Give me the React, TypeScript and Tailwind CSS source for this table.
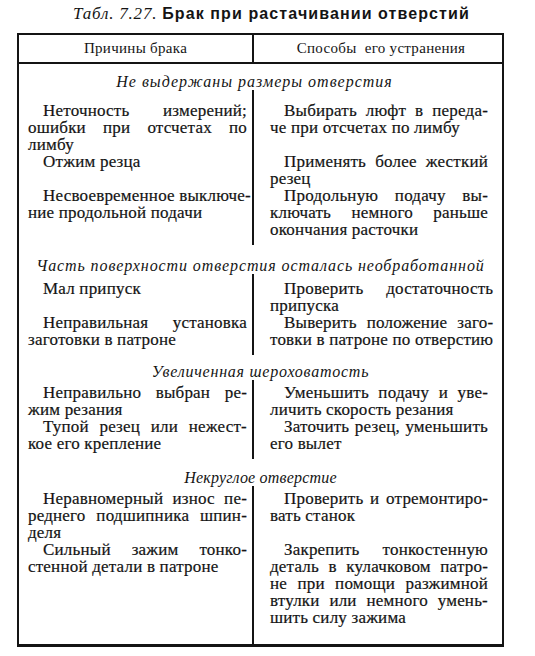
import React from "react";

type Row = [string[], string[]];
type Section = {
  title: string;
  headCls: string;
  firstCls: string;
  lastCls: string;
  rows: Row[];
};

const sections: Section[] = [
  {
    title: "Не выдержаны размеры отверстия",
    headCls: "pt-[9px] tracking-[1px] pr-[12px]",
    firstCls: "pt-[12px]",
    lastCls: "pb-[7px]",
    rows: [
      [
        ["Неточность измерений;", "ошибки при отсчетах по", "лимбу"],
        ["Выбирать люфт в переда-", "че при отсчетах по лимбу"],
      ],
      [["Отжим резца"], ["Применять более жесткий", "резец"]],
      [
        ["Несвоевременное выключе-", "ние продольной подачи"],
        ["Продольную подачу вы-", "ключать немного раньше", "окончания расточки"],
      ],
    ],
  },
  {
    title: "Часть поверхности отверстия осталась необработанной",
    headCls: "pt-[12px] tracking-[0.9px]",
    firstCls: "pt-[6px]",
    lastCls: "pb-[7px]",
    rows: [
      [["Мал припуск"], ["Проверить достаточность", "припуска"]],
      [
        ["Неправильная установка", "заготовки в патроне"],
        ["Выверить положение заго-", "товки в патроне по отверстию"],
      ],
    ],
  },
  {
    title: "Увеличенная шероховатость",
    headCls: "pt-[8px] tracking-[0.75px]",
    firstCls: "pt-[4px]",
    lastCls: "pb-[7px]",
    rows: [
      [
        ["Неправильно выбран ре-", "жим резания"],
        ["Уменьшить подачу и уве-", "личить скорость резания"],
      ],
      [
        ["Тупой резец или нежест-", "кое его крепление"],
        ["Заточить резец, уменьшить", "его вылет"],
      ],
    ],
  },
  {
    title: "Некруглое отверстие",
    headCls: "pt-[10px] tracking-[0.2px]",
    firstCls: "pt-[4px]",
    lastCls: "pb-[18px]",
    rows: [
      [
        ["Неравномерный износ пе-", "реднего подшипника шпин-", "деля"],
        ["Проверить и отремонтиро-", "вать станок"],
      ],
      [
        ["Сильный зажим тонко-", "стенной детали в патроне"],
        [
          "Закрепить тонкостенную",
          "деталь в кулачковом патро-",
          "не при помощи разжимной",
          "втулки или немного умень-",
          "шить силу зажима",
        ],
      ],
    ],
  },
];

function Lines({ lines, left }: { lines: string[]; left: boolean }) {
  return (
    <>
      {lines.map((l, i) => {
        const last = i === lines.length - 1;
        const indent = i === 0 ? (left ? "pl-[15px]" : "pl-[14px]") : "";
        return (
          <div
            key={i}
            className={
              "whitespace-nowrap h-[17px] " +
              indent +
              (last ? " text-left" : " text-justify [text-align-last:justify]")
            }
          >
            {l}
          </div>
        );
      })}
    </>
  );
}

export default function App() {
  return (
    <div className="w-[535px] h-[656px] bg-white text-[#141414] overflow-hidden font-['Liberation_Serif',serif]">
      <div className="pt-[4px] h-[33px] leading-[20px] text-center pl-[8px] whitespace-nowrap">
        <span className="italic text-[17px] tracking-[0.8px]">Табл. 7.27.</span>
        <span className="text-[16px] font-bold tracking-[1.1px] ml-[5px] font-['Liberation_Sans',sans-serif]">
          Брак при растачивании отверстий
        </span>
      </div>
      <div className="ml-[17px] w-[487px] border-x-2 border-t-2 border-b-[3px] border-[#141414]">
        <div className="grid grid-cols-[235px_1fr] border-b-2 border-[#141414] h-[29px] text-[15px] leading-[27px] tracking-[0.3px]">
          <div className="border-r-2 border-[#141414] text-center">Причины брака</div>
          <div className="text-center pl-[6px]">Способы&nbsp; его устранения</div>
        </div>
        {sections.map((s, si) => (
          <div key={si}>
            <div
              className={
                "text-center italic text-[16px] leading-[17px] whitespace-nowrap " +
                s.headCls
              }
            >
              {s.title}
            </div>
            <div className="grid grid-cols-[235px_1fr] text-[17px] leading-[17px] tracking-[0.2px] [-webkit-text-stroke:0.2px_#141414]">
              {s.rows.map((r, ri) => {
                const pad =
                  (ri === 0 ? s.firstCls + " " : "") +
                  (ri === s.rows.length - 1 ? s.lastCls : "");
                return (
                  <React.Fragment key={ri}>
                    <div className={"border-r-2 border-[#141414] pl-[9px] pr-[5px] " + pad}>
                      <Lines lines={r[0]} left={true} />
                    </div>
                    <div className={"pl-[16px] pr-[14px] " + pad}>
                      <Lines lines={r[1]} left={false} />
                    </div>
                  </React.Fragment>
                );
              })}
            </div>
          </div>
        ))}
      </div>
    </div>
  );
}
